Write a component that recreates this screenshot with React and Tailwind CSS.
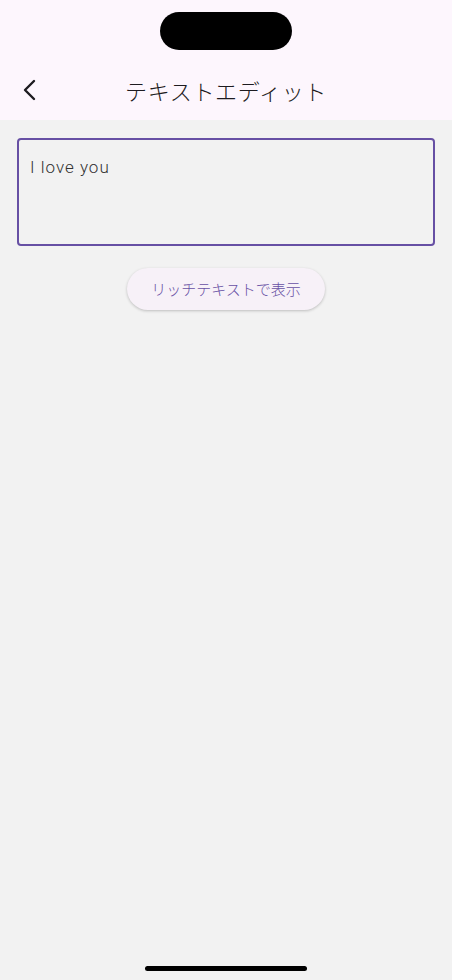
export default function App() {
  return (
    <div className="w-[452px] h-[980px] bg-[#f2f2f2] flex flex-col relative overflow-hidden" style={{ fontFamily: '"Noto Sans CJK JP", Roboto, sans-serif' }}>
      <div className="h-[120px] bg-[#fdf6fd] flex flex-col shrink-0">
        <div className="h-[62px] flex justify-center pt-[12px]">
          <div className="w-[132px] h-[38px] rounded-full bg-black" />
        </div>
        <div className="flex-1 flex items-center relative">
          <div className="absolute left-[18px] top-[16px] w-[24px] h-[24px]">
            <svg width="24" height="24" viewBox="0 0 24 24" fill="none">
              <path d="M16 3 L7 12 L16 21" stroke="#1d1b20" strokeWidth="2.4" strokeLinecap="round" strokeLinejoin="round" />
            </svg>
          </div>
          <div className="w-full text-center text-[22px] font-light text-[#1d1b20] pb-[2px] tracking-[0.7px]">テキストエディット</div>
        </div>
      </div>
      <div className="px-[17px] pt-[18px] flex flex-col items-center">
        <div className="w-full h-[108px] border-2 border-[#6750a4] rounded-[4px] px-[11px] pt-[15px]">
          <div className="text-[17px] font-light text-[#333] tracking-[1px]" style={{ fontFamily: 'Roboto, sans-serif' }}>I love you</div>
        </div>
        <div className="mt-[22px] w-[198px] h-[42px] rounded-full bg-[#f7f1f8] shadow-[0_1px_3px_rgba(0,0,0,0.22)] flex items-center justify-center text-[15px] font-light text-[#6750a4]">
          リッチテキストで表示
        </div>
      </div>
      <div className="absolute bottom-[9px] left-[145px] w-[162px] h-[5px] rounded-full bg-black" />
    </div>
  );
}
